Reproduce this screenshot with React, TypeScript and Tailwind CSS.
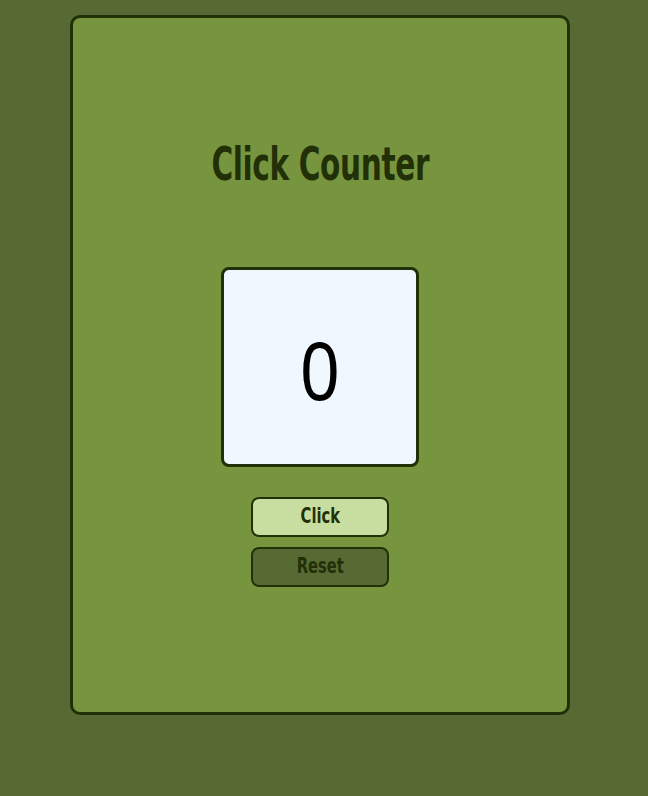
import React, { useState } from "react";

export default function App() {
  const [count, setCount] = useState(0);
  return (
    <div className="min-h-[796px] w-full bg-[#586a33] flex justify-center pt-[15px] pr-[8px]">
      <div className="w-[500px] h-[700px] bg-[#77953f] border-[3px] border-[#223008] rounded-[10px] flex flex-col items-center">
        <h1 className="mt-[120px] h-[52px] flex items-center text-[46px] font-bold tracking-[-0.5px] text-[#223008] scale-x-[0.715] [font-family:'DejaVu_Sans',sans-serif] [font-stretch:condensed] whitespace-nowrap">
          Click Counter
        </h1>
        <div className="mt-[77px] w-[198px] h-[200px] bg-[#f0f8ff] border-[3px] border-[#223008] rounded-[8px] flex items-center justify-center">
          <span className="mt-[4px] text-[80px] font-normal leading-none text-black scale-x-[0.88] [font-family:'Noto_Sans',sans-serif]">{count}</span>
        </div>
        <button
          onClick={() => setCount(count + 1)}
          className="mt-[30px] w-[138px] h-[40px] bg-[#c7dea0] border-2 border-[#223008] rounded-[8px] flex items-center justify-center"
        >
          <span className="text-[21px] font-bold text-[#223008] scale-x-[0.78] [font-family:'DejaVu_Sans',sans-serif] [font-stretch:condensed]">Click</span>
        </button>
        <button
          onClick={() => setCount(0)}
          className="mt-[10px] w-[138px] h-[40px] bg-[#586a33] border-2 border-[#223008] rounded-[8px] flex items-center justify-center"
        >
          <span className="text-[21px] font-bold text-[#223008] scale-x-[0.78] [font-family:'DejaVu_Sans',sans-serif] [font-stretch:condensed]">Reset</span>
        </button>
      </div>
    </div>
  );
}
